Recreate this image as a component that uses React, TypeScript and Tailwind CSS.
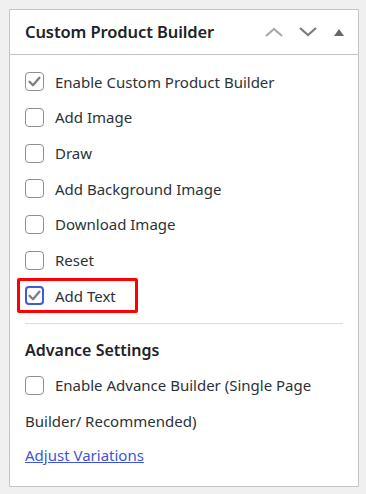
import React from "react";

const font = { fontFamily: '"Noto Sans", "Open Sans", sans-serif' };

function Box({ checked, focus }: { checked?: boolean; focus?: boolean }) {
  return (
    <span
      className={`inline-flex shrink-0 items-center justify-center w-[19px] h-[19px] rounded-[4px] bg-white border ${
        focus ? "border-[#3d5ae0] border-2" : "border-[#8c8f94]"
      }`}
    >
      {checked && (
        <svg width="15" height="15" viewBox="0 0 20 20">
          <path d="M3.5 10.5 L8 15 L16.5 5" fill="none" stroke="#7e8287" strokeWidth="3.2" strokeLinecap="round" strokeLinejoin="round" />
        </svg>
      )}
    </span>
  );
}

function Row({ label, checked }: { label: string; checked?: boolean }) {
  return (
    <div className="flex items-center gap-[11px] h-[35.7px]">
      <Box checked={checked} />
      <span>{label}</span>
    </div>
  );
}

export default function App() {
  return (
    <div className="w-[366px] h-[494px] bg-[#f0f0f1] pt-[9px] pl-[9px]" style={font}>
      <div className="w-[350px] h-[478px] bg-white border border-[#c3c4c7] text-[#2c3338] text-[15px]">
        <div className="h-[45px] flex items-center justify-between border-b border-[#c3c4c7] pl-[15px] pr-[12px]">
          <h2 className="text-[16.5px] font-semibold text-[#1d2327] tracking-[-0.1px]">Custom Product Builder</h2>
          <div className="flex items-center">
            <svg width="20" height="12" viewBox="0 0 20 12" className="mr-[14px]">
              <path d="M2 10 L10 3 L18 10" fill="none" stroke="#a7aaad" strokeWidth="2.2" />
            </svg>
            <svg width="20" height="12" viewBox="0 0 20 12" className="mr-[16px]">
              <path d="M2 2 L10 9 L18 2" fill="none" stroke="#787c82" strokeWidth="2.2" />
            </svg>
            <svg width="10" height="8" viewBox="0 0 10 8" className="mr-[2px]">
              <path d="M0 8 L5 1 L10 8 Z" fill="#646970" />
            </svg>
          </div>
        </div>
        <div className="px-[15px] pt-[9px]">
          <Row label="Enable Custom Product Builder" checked />
          <Row label="Add Image" />
          <Row label="Draw" />
          <Row label="Add Background Image" />
          <Row label="Download Image" />
          <Row label="Reset" />
          <div className="flex h-[35.7px] items-center -ml-[8px]">
            <div className="flex items-center gap-[11px] border-[3px] border-[#ff0000] rounded-[2px] h-[35px] pl-[5px] pr-[19px]">
              <Box checked focus />
              <span>Add Text</span>
            </div>
          </div>
          <div className="border-t border-[#dcdcde] mt-[9px]" />
          <h3 className="text-[16px] font-semibold text-[#1d2327] mt-[15px] leading-[22px]">Advance Settings</h3>
          <p className="leading-[35.7px] mt-[7px]">
            <span className="inline-flex align-middle mr-[11px] -mt-[3px]">
              <Box />
            </span>
            Enable Advance Builder (Single Page Builder/ Recommended)
          </p>
          <a href="#" className="block text-[#3c55d8] underline leading-[33px]">Adjust Variations</a>
        </div>
      </div>
    </div>
  );
}
